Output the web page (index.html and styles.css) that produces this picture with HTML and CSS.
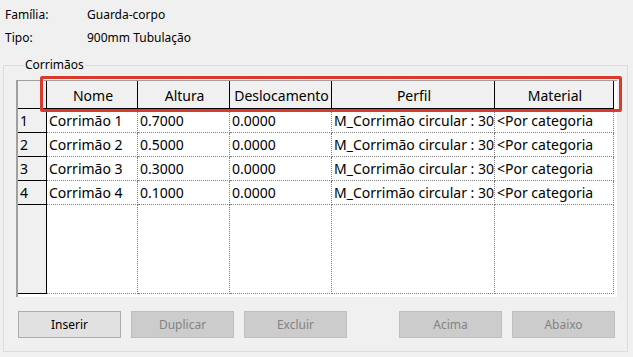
FILE: index.html
```html
<!DOCTYPE html>
<html lang="pt">

<head>
    <meta charset="UTF-8">
    <title>Propriedades do tipo - Corrimãos</title>
    <link rel="stylesheet" href="styles.css">
</head>

<body>
    <div class="info">
        <div class="info-row"><span class="info-label">Família:</span><span>Guarda-corpo</span></div>
        <div class="info-row"><span class="info-label">Tipo:</span><span>900mm Tubulação</span></div>
    </div>

    <fieldset class="group">
        <legend>Corrimãos</legend>

        <div class="grid">
            <table>
                <colgroup>
                    <col style="width: 29px">
                    <col style="width: 91px">
                    <col style="width: 92px">
                    <col style="width: 102px">
                    <col style="width: 163px">
                    <col style="width: 119px">
                </colgroup>
                <thead>
                    <tr>
                        <th class="corner"></th>
                        <th>Nome</th>
                        <th>Altura</th>
                        <th>Deslocamento</th>
                        <th>Perfil</th>
                        <th>Material</th>
                    </tr>
                </thead>
                <tbody id="rows"></tbody>
            </table>
            <div class="highlight"></div>
        </div>

        <div class="buttons">
            <div class="btn-group">
                <button class="btn">Inserir</button>
                <button class="btn" disabled>Duplicar</button>
                <button class="btn" disabled>Excluir</button>
            </div>
            <div class="btn-group">
                <button class="btn" disabled>Acima</button>
                <button class="btn" disabled>Abaixo</button>
            </div>
        </div>
    </fieldset>

    <script>
        const rails = [
            { nome: 'Corrimão 1', altura: '0.7000' },
            { nome: 'Corrimão 2', altura: '0.5000' },
            { nome: 'Corrimão 3', altura: '0.3000' },
            { nome: 'Corrimão 4', altura: '0.1000' }
        ];

        const body = document.getElementById('rows');
        rails.forEach((rail, i) => {
            const tr = document.createElement('tr');
            tr.innerHTML = `
                <td class="num">${i + 1}</td>
                <td>${rail.nome}</td>
                <td>${rail.altura}</td>
                <td>0.0000</td>
                <td>M_Corrimão circular : 30</td>
                <td>&lt;Por categoria</td>`;
            body.appendChild(tr);
        });

        // empty space at the bottom of the grid
        const filler = document.createElement('tr');
        filler.className = 'filler';
        filler.innerHTML = '<td class="num"></td><td></td><td></td><td></td><td></td><td></td>';
        body.appendChild(filler);
    </script>
</body>

</html>
```

FILE: styles.css
```css
body {
    margin: 0;
    width: 633px;
    height: 357px;
    background-color: #f0f0f0;
    font-family: "Noto Sans", "Open Sans", sans-serif;
    font-size: 12px;
    color: #000;
    overflow: hidden;
}

.info {
    padding-top: 3px;
}

.info-row {
    display: flex;
    height: 23px;
    align-items: center;
    padding-left: 5px;
}

.info-label {
    width: 82px;
}

.group {
    margin: 8px 5px 0 3px;
    padding: 0 10px 13px 12px;
    border: 1px solid #dcdcdc;
    border-radius: 0;
}

.group legend {
    margin-left: 8px;
    padding: 0 1px;
    line-height: 16px;
}

.grid {
    position: relative;
    margin-top: 7px;
    width: 596px;
    background-color: #fff;
    border-left: 2px solid #a0a0a0;
    border-top: 1px solid #a0a0a0;
    padding: 0 3px 3px 0;
}

table {
    table-layout: fixed;
    width: 596px;
    border-collapse: separate;
    border-spacing: 0;
    font-size: 14px;
}

th,
td {
    box-sizing: border-box;
    padding: 0 0 0 2px;
    white-space: nowrap;
    overflow: hidden;
    text-align: left;
}

th {
    height: 28px;
    padding-top: 1px;
    background-color: #f0f0f0;
    font-weight: normal;
    text-align: center;
    border-right: 1px solid #000;
    border-bottom: 1px solid #000;
}

td {
    height: 24px;
    border-right: 1px dotted #808080;
    border-bottom: 1px dotted #808080;
}

td.num {
    background-color: #f0f0f0;
    border-right: 1px solid #000;
    border-bottom: 1px solid #000;
}

tr.filler td {
    height: 89px;
}

.highlight {
    position: absolute;
    left: 22px;
    top: -5px;
    width: 576px;
    height: 30px;
    border: 3px solid #d93a2b;
    border-radius: 2px;
}

.buttons {
    display: flex;
    justify-content: space-between;
    margin: 14px 0 0 2px;
    width: 597px;
}

.btn-group {
    display: flex;
    gap: 10px;
}

.btn {
    width: 103px;
    height: 27px;
    font-family: inherit;
    font-size: 12px;
    color: #000;
    background-color: #e1e1e1;
    border: 1px solid #adadad;
    border-radius: 0;
}

.btn:disabled {
    color: #838383;
    background-color: #cccccc;
    border-color: #bfbfbf;
}
```
